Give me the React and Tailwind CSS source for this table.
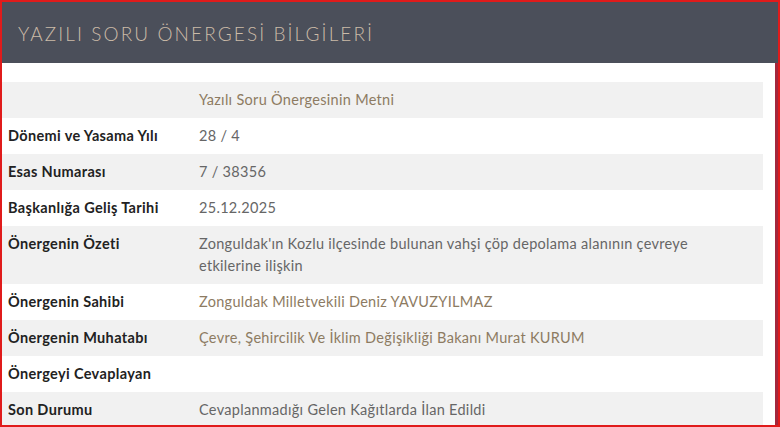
const rows = [
  { label: "", value: "Yazılı Soru Önergesinin Metni", link: true },
  { label: "Dönemi ve Yasama Yılı", value: "28 / 4" },
  { label: "Esas Numarası", value: "7 / 38356" },
  { label: "Başkanlığa Geliş Tarihi", value: "25.12.2025" },
  {
    label: "Önergenin Özeti",
    value:
      "Zonguldak'ın Kozlu ilçesinde bulunan vahşi çöp depolama alanının çevreye etkilerine ilişkin",
  },
  { label: "Önergenin Sahibi", value: "Zonguldak Milletvekili Deniz YAVUZYILMAZ", link: true },
  { label: "Önergenin Muhatabı", value: "Çevre, Şehircilik Ve İklim Değişikliği Bakanı Murat KURUM", link: true },
  { label: "Önergeyi Cevaplayan", value: "" },
  { label: "Son Durumu", value: "Cevaplanmadığı Gelen Kağıtlarda İlan Edildi" },
];

export default function App() {
  return (
    <div
      className="w-[780px] h-[427px] overflow-hidden bg-white border-l-2 border-t-2 border-b-2 border-r-2 border-[#e01b1b] flex flex-col"
      style={{ fontFamily: "Lato, 'Open Sans', sans-serif" }}
    >
      <div className="h-[61px] shrink-0 bg-[#4b4f5a] flex items-center pl-4 pr-2">
        <h2 className="text-[19px] font-light tracking-[2.1px] text-[#cbbba8] mt-[4px]">
          YAZILI SORU ÖNERGESİ BİLGİLERİ
        </h2>
      </div>
      <div className="flex-1 flex border-r-[3px] border-[#a3283c]">
        <div className="w-[761px] pt-[19px]">
          {rows.map((r, i) => (
            <div
              key={i}
              className={`flex py-[9px] ${i % 2 === 0 ? "bg-[#f1f1f1]" : "bg-white"}`}
            >
              <div className="w-[197px] shrink-0 pl-[6px] text-[14.5px] tracking-[0.35px] font-bold text-[#222] leading-[18px]">
                {r.label}
              </div>
              <div
                className={`flex-1 pr-[60px] text-[14.5px] tracking-[0.3px] leading-[22px] -my-[2px] ${
                  r.link ? "text-[#8d7b62]" : "text-[#666]"
                }`}
              >
                {r.value}
              </div>
            </div>
          ))}
        </div>
      </div>
    </div>
  );
}
